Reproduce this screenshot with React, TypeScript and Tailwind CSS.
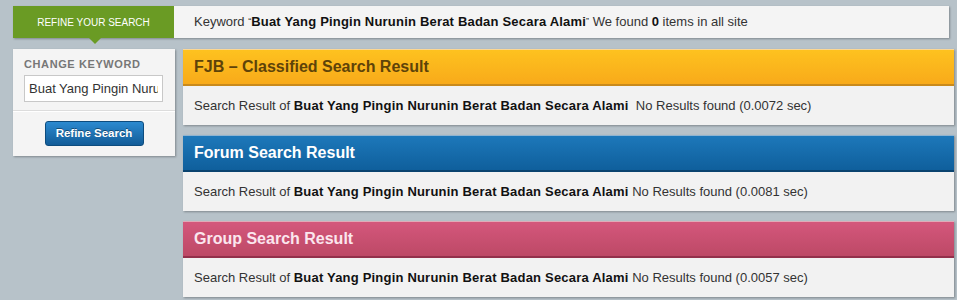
import React from "react"

const KEYWORD = "Buat Yang Pingin Nurunin Berat Badan Secara Alami"

type Result = {
  title: string
  head: string
  titleColor: string
  time: string
  gap?: boolean
}

const results: Result[] = [
  {
    title: "FJB \u2013 Classified Search Result",
    head: "bg-[linear-gradient(#fec21f,#f8aa1a)] border-b-[#c98a1c]",
    titleColor: "text-[#5e4309]",
    time: "0.0072",
    gap: true,
  },
  {
    title: "Forum Search Result",
    head: "bg-[linear-gradient(#1d78ba,#0f5f9c)] border-b-[#0a436f]",
    titleColor: "text-white",
    time: "0.0081",
  },
  {
    title: "Group Search Result",
    head: "bg-[linear-gradient(#d4577c,#bd4966)] border-b-[#93304b]",
    titleColor: "text-[#fbe6ee]",
    time: "0.0057",
  },
]

function ResultPanel({ r }: { r: Result }) {
  return (
    <div className="bg-[#f2f2f2] shadow-[1px_1px_2px_rgba(0,0,0,0.3)]">
      <div className={`h-[37px] flex items-center pl-[11px] border-b-2 border-t border-t-[#fff8] ${r.head}`}>
        <span className={`text-[16px] font-bold ${r.titleColor}`}>{r.title}</span>
      </div>
      <div className="h-[39px] flex items-center pl-[11px] pt-[1px] text-[13px] text-[#333]">
        Search Result of&nbsp;<b className="text-[#111] tracking-[0.2px]">{KEYWORD}</b>
        {r.gap ? "\u00a0\u00a0" : "\u00a0"}No Results found ({r.time} sec)
      </div>
    </div>
  )
}

export default function App() {
  return (
    <div
      className="w-[957px] h-[300px] overflow-hidden bg-[#b7c2c9] pt-[6px] pl-[13px]"
      style={{ fontFamily: '"Liberation Sans", Arial, sans-serif' }}
    >
      {/* top bar */}
      <div className="flex w-[936px] h-[32px] bg-[#f4f4f4] shadow-[1px_1px_2px_rgba(0,0,0,0.3)]">
        <div className="relative w-[161px] bg-[#6a9b24] flex items-center justify-center text-[10px] text-white">
          REFINE YOUR SEARCH
          <span className="absolute left-[76px] top-full border-x-[6px] border-x-transparent border-t-[6px] border-t-[#6a9b24]" />
        </div>
        <div className="flex items-center pl-[20px] text-[13px] text-[#333]">
          Keyword&nbsp;<span className="text-[9px] self-start mt-[9px]">&ldquo;</span>
          <b className="text-[#111] tracking-[0.2px]">{KEYWORD}</b>
          <span className="text-[9px] self-start mt-[9px]">&rdquo;</span>&nbsp;We found&nbsp;<b className="text-[#111]">0</b>
          &nbsp;items in all site
        </div>
      </div>

      <div className="flex mt-[11px] gap-[8px]">
        {/* left panel */}
        <div className="w-[162px] h-[107px] self-start bg-[#f4f4f4] shadow-[1px_1px_2px_rgba(0,0,0,0.3)]">
          <div className="px-[11px] pt-[8px]">
            <div className="text-[11px] font-bold tracking-[0.6px] text-[#777] leading-[14px]">CHANGE KEYWORD</div>
            <input
              readOnly
              value={KEYWORD}
              className="mt-[4px] w-[139px] h-[27px] border border-[#c8c8c8] bg-white px-[4px] text-[13px] text-[#333] outline-none"
            />
          </div>
          <div className="mt-[8px] border-t border-[#dcdcdc] border-b border-b-white" />
          <div className="flex justify-center pt-[9px]">
            <button className="w-[99px] h-[25px] rounded-[3px] border border-[#0d4c7e] bg-[linear-gradient(#2c8ad0,#125c98)] text-[11.5px] font-bold text-white [text-shadow:0_-1px_0_rgba(0,0,0,0.4)]">
              Refine Search
            </button>
          </div>
        </div>

        {/* results */}
        <div className="w-[771px] flex flex-col gap-[10px]">
          {results.map((r) => (
            <ResultPanel key={r.title} r={r} />
          ))}
        </div>
      </div>
    </div>
  )
}
